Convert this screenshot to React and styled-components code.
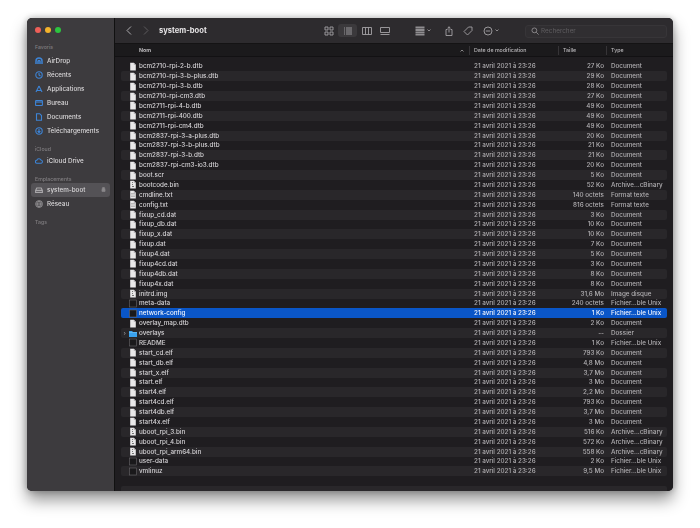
import React from "react";
import styled, { createGlobalStyle } from "styled-components";

const Global = createGlobalStyle`
  html, body { margin: 0; background: #fff; }
  body { width: 700px; height: 528px; overflow: hidden; font-family: Inter, "Liberation Sans", sans-serif; }
`;
const Page = styled.div`
  width: 700px; height: 528px; box-sizing: border-box; padding: 18px 27px 37px; overflow: hidden;
`;
const Win = styled.div`
  width: 646px; height: 473px; display: flex; overflow: hidden; border-radius: 5px; background: #1f1d20;
  box-shadow: 0 9px 16px rgba(0,0,0,.42), 0 0 7px rgba(0,0,0,.28);
  filter: blur(.3px);
`;
const Sidebar = styled.aside`
  width: 88px; flex: none; box-sizing: border-box; background: #3d3b3e; border-right: 1px solid #111; padding: 0 4px;
  display: flex; flex-direction: column;
`;
const Traffic = styled.div`display: flex; gap: 4px; height: 26px; padding: 0 0 0 3.5px; align-items: center; margin-top: -1px;`;
const Dot = styled.span`width: 6px; height: 6px; border-radius: 50%; background: ${p => p.$c};`;
const SideLabel = styled.div`
  font-size: 5.2px; color: #807e81; font-weight: 500; padding-left: 4px; height: 8px; line-height: 8px; margin-top: ${p => p.$mt}px;
`;
const SideItem = styled.div`
  display: flex; align-items: center; gap: 4.5px; height: 14px; box-sizing: border-box; padding: 0 3px 0 3.5px; border-radius: 3px;
  font-size: 6.3px; color: #dad8da; font-weight: 500; white-space: nowrap; margin-top: ${p => p.$mt || 0}px;
  background: ${p => p.$active ? "#545256" : "transparent"};
`;
const SideIcon = styled.svg`width: 8px; height: 8px; flex: none; fill: none; stroke: ${p => p.$c}; stroke-width: 1.1;`;
const LockIcon = styled(SideIcon)`width: 5px; height: 5px; margin-right: 1px;`;
const Spacer = styled.span`flex: 1;`;
const Main = styled.main`flex: 1; min-width: 0; display: flex; flex-direction: column;`;
const Toolbar = styled.header`
  height: 26px; flex: none; box-sizing: border-box; background: #2d2b2e; border-bottom: 1px solid #141314;
  display: flex; align-items: center; padding-left: 11px; position: relative;
`;
const Nav = styled.svg`width: 6px; height: 9px; fill: none; stroke: ${p => p.$dim ? "#5c5a5d" : "#acaaad"}; stroke-width: 1; margin-right: ${p => p.$mr}px;`;
const Title = styled.div`font-size: 7.6px; font-weight: 700; color: #e6e4e6; width: 161px;`;
const Tools = styled.div`display: flex; align-items: center;`;
const ToolBtn = styled.div`
  display: flex; align-items: center; justify-content: center; gap: 2px; height: 13px; border-radius: 3px; box-sizing: border-box;
  width: ${p => p.$w}px; margin-right: ${p => p.$mr || 0}px; background: ${p => p.$on ? "#3b393c" : "transparent"};
`;
const TIcon = styled.svg`width: ${p => p.$s || 10}px; height: ${p => p.$s || 10}px; fill: none; stroke: #a4a2a5; stroke-width: .9;`;
const DottedIcon = styled(TIcon)`stroke: none; fill: #8f8d90;`;
const Caret = styled.svg`width: 4px; height: 3px; fill: none; stroke: #a4a2a5; stroke-width: .8;`;
const Search = styled.div`
  position: absolute; left: 410px; top: 6.5px; width: 142px; height: 13.5px; box-sizing: border-box; border-radius: 3px;
  background: #302e31; border: 1px solid #373538; display: flex; align-items: center; gap: 2px; padding-left: 5px;
  font-size: 6.4px; color: #5f5d60;
`;
const Header = styled.div`
  height: 13px; flex: none; background: #1b1a1c; border-bottom: 1px solid #121113; box-sizing: border-box; display: flex; align-items: center;
  font-size: 5.3px; color: #bab8bb;
`;
const HCell = styled.div`
  width: ${p => p.$w}px; flex: none; box-sizing: border-box; padding-left: ${p => p.$pl}px; height: 9px; line-height: 9px;
  border-right: ${p => p.$sep ? "1px solid #363437" : "none"}; display: flex; justify-content: space-between; align-items: center;
  padding-right: ${p => p.$pr || 0}px; font-weight: ${p => p.$b ? 700 : 500};
`;
const List = styled.div`padding: 4.5px 6px 0; flex: 1; overflow: hidden; background: #1f1d20;`;
const Row = styled.div`
  height: 9.88px; display: flex; align-items: center; border-radius: 2px; font-size: 6.3px; font-weight: 500; white-space: nowrap;
  color: ${p => p.$sel ? "#f2f6ff" : "#d6d4d7"};
  background: ${p => p.$sel ? "#0a56c8" : p.$odd ? "#29272a" : "transparent"};
`;
const Disc = styled.span`width: 8px; flex: none; font-size: 6px; color: #99979a; padding-left: 2.5px; box-sizing: border-box; line-height: 1;`;
const FileIco = styled.svg`width: 8px; height: 9px; flex: none; margin-right: 2px;`;
const NameCell = styled.span`width: 335px; flex: none;`;
const DateCell = styled.span`width: 96px; flex: none; color: ${p => p.$sel ? "#f2f6ff" : "#b0aeb1"};`;
const SizeCell = styled.span`width: 34px; flex: none; text-align: right; color: ${p => p.$sel ? "#f2f6ff" : "#b0aeb1"}; margin-right: 7px;`;
const TypeCell = styled.span`color: ${p => p.$sel ? "#f2f6ff" : "#b0aeb1"};`;

const D = "Document", U = "Fichier...ble Unix", A = "Archive...cBinary", T = "Format texte";
const rows = [
  ["bcm2710-rpi-2-b.dtb","27 Ko",D],["bcm2710-rpi-3-b-plus.dtb","29 Ko",D],["bcm2710-rpi-3-b.dtb","28 Ko",D],["bcm2710-rpi-cm3.dtb","27 Ko",D],
  ["bcm2711-rpi-4-b.dtb","49 Ko",D],["bcm2711-rpi-400.dtb","49 Ko",D],["bcm2711-rpi-cm4.dtb","49 Ko",D],["bcm2837-rpi-3-a-plus.dtb","20 Ko",D],
  ["bcm2837-rpi-3-b-plus.dtb","21 Ko",D],["bcm2837-rpi-3-b.dtb","21 Ko",D],["bcm2837-rpi-cm3-io3.dtb","20 Ko",D],["boot.scr","5 Ko",D],
  ["bootcode.bin","52 Ko",A,"bin"],["cmdline.txt","140 octets",T,"txt"],["config.txt","816 octets",T,"txt"],["fixup_cd.dat","3 Ko",D],
  ["fixup_db.dat","10 Ko",D],["fixup_x.dat","10 Ko",D],["fixup.dat","7 Ko",D],["fixup4.dat","5 Ko",D],["fixup4cd.dat","3 Ko",D],
  ["fixup4db.dat","8 Ko",D],["fixup4x.dat","8 Ko",D],["initrd.img","31,6 Mo","Image disque","bin"],["meta-data","240 octets",U,"unix"],
  ["network-config","1 Ko",U,"unix"],["overlay_map.dtb","2 Ko",D],["overlays","--","Dossier","dir"],["README","1 Ko",U,"unix"],
  ["start_cd.elf","793 Ko",D],["start_db.elf","4,8 Mo",D],["start_x.elf","3,7 Mo",D],["start.elf","3 Mo",D],["start4.elf","2,2 Mo",D],
  ["start4cd.elf","793 Ko",D],["start4db.elf","3,7 Mo",D],["start4x.elf","3 Mo",D],["uboot_rpi_3.bin","516 Ko",A,"bin"],
  ["uboot_rpi_4.bin","572 Ko",A,"bin"],["uboot_rpi_arm64.bin","558 Ko",A,"bin"],["user-data","2 Ko",U,"unix"],["vmlinuz","9,5 Mo",U,"unix"],
];

function Icon({ kind }) {
  if (kind === "dir") return <FileIco viewBox="0 0 8 9"><path d="M0 2h3l1 1h4v5H0z" fill="#3aa2ee" /><path d="M0 3.2h8v.7H0z" fill="#6cc0f5" /></FileIco>;
  if (kind === "unix") return <FileIco viewBox="0 0 8 9"><rect x=".5" y="1" width="7" height="7" fill="#1a191b" stroke="#6a686c" strokeWidth=".6" /></FileIco>;
  return (
    <FileIco viewBox="0 0 8 9">
      <path d="M1.2 .7h3.6l2 2v5.8H1.2z" fill="#e9e8e9" />
      <path d="M4.8 .7v2h2z" fill="#a9a7aa" />
      {kind === "bin" && <path d="M3 2h1v1H3zM3 4h1v1H3zM3 6h2v1H3z" fill="#777" />}
      {kind === "txt" && <path d="M2 3.5h4M2 5h4M2 6.5h4" stroke="#8a888b" strokeWidth=".5" />}
    </FileIco>
  );
}

const SI = ({ c, children }) => <SideIcon viewBox="0 0 8 8" $c={c}>{children}</SideIcon>;
const blue = "#3d84d6";

export default function App() {
  return (
    <Page>
      <Global />
      <Win>
        <Sidebar>
          <Traffic><Dot $c="#ee5f58" /><Dot $c="#f4b32c" /><Dot $c="#2cc43f" /></Traffic>
          <SideLabel $mt={0}>Favoris</SideLabel>
          <SideItem $mt={3}><SI c={blue}><path d="M1 7V4a3 3 0 0 1 6 0v3M3 7V4.5a1 1 0 0 1 2 0V7" strokeWidth="1.5" /></SI>AirDrop</SideItem>
          <SideItem><SI c={blue}><circle cx="4" cy="4" r="3.2" /><path d="M4 2v2l1.5 1" /></SI>Récents</SideItem>
          <SideItem><SI c={blue}><path d="M4 1 1 7M4 1l3 6M1.5 5.5h5" /></SI>Applications</SideItem>
          <SideItem><SI c={blue}><rect x=".6" y="1.5" width="6.8" height="5" rx=".6" /><path d="M.6 3h6.8" /></SI>Bureau</SideItem>
          <SideItem><SI c={blue}><path d="M1.5.7h3.2l1.8 1.8v4.8h-5z" /></SI>Documents</SideItem>
          <SideItem><SI c={blue}><circle cx="4" cy="4" r="3.2" /><path d="M4 2v3.6M2.6 4.2 4 5.6l1.4-1.4" /></SI>Téléchargements</SideItem>
          <SideLabel $mt={7}>iCloud</SideLabel>
          <SideItem $mt={0.5}><SI c={blue}><path d="M2 6.3a1.5 1.5 0 0 1-.2-3A2.3 2.3 0 0 1 6 3a1.7 1.7 0 0 1 .2 3.3z" /></SI>iCloud Drive</SideItem>
          <SideLabel $mt={7}>Emplacements</SideLabel>
          <SideItem $active $mt={0}>
            <SI c="#a9a7aa"><path d="M1.8 2h4.4L7.4 4.4v2H.6v-2zM.6 4.4h6.8" /></SI>system-boot<Spacer />
            <LockIcon viewBox="0 0 8 8" $c="#8a888b"><path d="M2 4V2.5a2 2 0 0 1 4 0V4M1.5 4h5v3h-5z" fill="#8a888b" /></LockIcon>
          </SideItem>
          <SideItem><SI c="#8b898c"><circle cx="4" cy="4" r="3.2" /><path d="M.8 4h6.4M4 .8C2 2.5 2 5.5 4 7.2M4 .8c2 1.7 2 4.7 0 6.4" /></SI>Réseau</SideItem>
          <SideLabel $mt={7}>Tags</SideLabel>
        </Sidebar>
        <Main>
          <Toolbar>
            <Nav viewBox="0 0 6 9" $mr={11}><path d="M5 .5 1 4.5l4 4" /></Nav>
            <Nav viewBox="0 0 6 9" $dim $mr={10}><path d="M1 .5l4 4-4 4" /></Nav>
            <Title>system-boot</Title>
            <Tools>
              <ToolBtn $w={18}><TIcon viewBox="0 0 10 10"><path d="M1 1h3v3H1zM6 1h3v3H6zM1 6h3v3H1zM6 6h3v3H6z" /></TIcon></ToolBtn>
              <ToolBtn $w={19} $on><TIcon viewBox="0 0 10 10"><path d="M3 2h6M3 4h6M3 6h6M3 8h6M1 2h1M1 4h1M1 6h1M1 8h1" /></TIcon></ToolBtn>
              <ToolBtn $w={19}><TIcon viewBox="0 0 10 10"><path d="M.5 1.5h9v7h-9zM3.5 1.5v7M6.5 1.5v7" /></TIcon></ToolBtn>
              <ToolBtn $w={18} $mr={19}><TIcon viewBox="0 0 10 10"><path d="M.5 1.5h9v5h-9zM.5 8.5h9" /></TIcon></ToolBtn>
              <ToolBtn $w={20} $mr={9}><DottedIcon viewBox="0 0 10 10"><path d="M.5.5h9v2h-9zM.5 3h9v2h-9zM.5 5.5h9v2h-9zM.5 8h9v1.5h-9z" /></DottedIcon><Caret viewBox="0 0 4 3"><path d="M.5.5 2 2 3.5.5" /></Caret></ToolBtn>
              <ToolBtn $w={13} $mr={6}><TIcon viewBox="0 0 10 10"><path d="M3.5 3.5H2v6h6v-6H6.5M5 6.5V.8M3.5 2.2 5 .8l1.5 1.4" /></TIcon></ToolBtn>
              <ToolBtn $w={13} $mr={7}><TIcon viewBox="0 0 10 10"><path d="M5.5 1H9v3.5L4.5 9 1 5.5z" /></TIcon></ToolBtn>
              <ToolBtn $w={20}><TIcon viewBox="0 0 10 10"><circle cx="5" cy="5" r="4" /><path d="M2.8 5h4.4" /></TIcon><Caret viewBox="0 0 4 3"><path d="M.5.5 2 2 3.5.5" /></Caret></ToolBtn>
            </Tools>
            <Search>
              <TIcon viewBox="0 0 10 10" $s={8}><circle cx="4.2" cy="4.2" r="3" /><path d="m6.5 6.5 3 3" /></TIcon>
              Rechercher
            </Search>
          </Toolbar>
          <Header>
            <HCell $w={355} $pl={24} $pr={5} $sep $b>
              Nom
              <Caret viewBox="0 0 4 3"><path d="M.5 2.5 2 1l1.5 1.5" /></Caret>
            </HCell>
            <HCell $w={89} $pl={4} $sep>Date de modification</HCell>
            <HCell $w={48} $pl={4} $sep>Taille</HCell>
            <HCell $w={60} $pl={4}>Type</HCell>
          </Header>
          <List>
            {rows.map((r, i) => {
              const sel = r[0] === "network-config";
              return (
                <Row key={r[0]} $odd={i % 2 === 1} $sel={sel}>
                  <Disc>{r[3] === "dir" ? "›" : ""}</Disc>
                  <Icon kind={r[3]} />
                  <NameCell>{r[0]}</NameCell>
                  <DateCell $sel={sel}>21 avril 2021 à 23:26</DateCell>
                  <SizeCell $sel={sel}>{r[1]}</SizeCell>
                  <TypeCell $sel={sel}>{r[2]}</TypeCell>
                </Row>
              );
            })}
            <Row />
            <Row $odd />
          </List>
        </Main>
      </Win>
    </Page>
  );
}
